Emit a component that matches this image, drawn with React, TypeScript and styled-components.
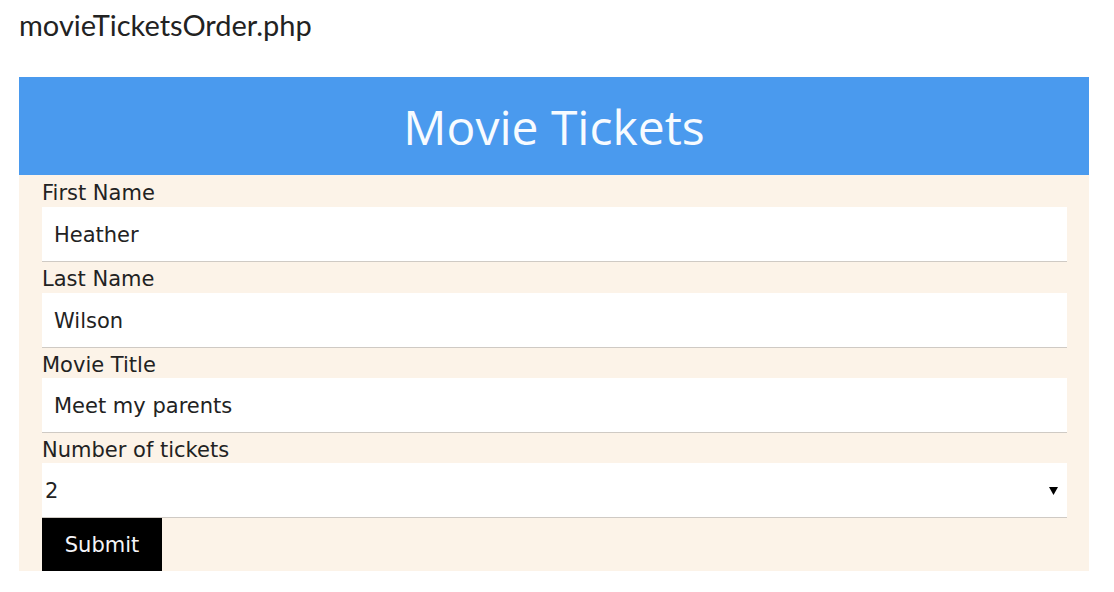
import styled, { createGlobalStyle } from "styled-components";

const GlobalStyle = createGlobalStyle`
  html, body {
    margin: 0;
    background: #ffffff;
  }
`;

const Page = styled.div`
  padding: 0 25px 0 19px;
`;

const FileName = styled.div`
  font-family: Lato, "Open Sans", sans-serif;
  font-size: 29px;
  color: #222;
  line-height: 32px;
  padding-top: 9px;
  height: 77px;
  box-sizing: border-box;
`;

const Panel = styled.div`
  background: #fcf3e8;
`;

const Header = styled.h1`
  margin: 0;
  height: 98px;
  background: #4a9aee;
  color: #f7fbff;
  font-family: "Open Sans", "Noto Sans", sans-serif;
  font-weight: 400;
  font-size: 48px;
  display: flex;
  align-items: center;
  justify-content: center;
`;

const Form = styled.form`
  padding: 0 22px 0 23px;
  display: flex;
  flex-direction: column;
`;

const Label = styled.label<{ $h: number }>`
  font-family: "DejaVu Sans", Verdana, sans-serif;
  font-size: 21px;
  color: #222;
  height: ${(p) => p.$h}px;
  padding-top: 3px;
  display: flex;
  align-items: center;
  box-sizing: border-box;
`;

const Input = styled.input`
  height: 55px;
  box-sizing: border-box;
  border: none;
  border-bottom: 1px solid #cfcac4;
  background: #fff;
  padding: 2px 12px 0;
  font-family: "DejaVu Sans", Verdana, sans-serif;
  font-size: 21px;
  color: #222;
  outline: none;
`;

const SelectWrap = styled.div`
  position: relative;
`;

const Select = styled.select`
  width: 100%;
  height: 55px;
  box-sizing: border-box;
  border: none;
  border-bottom: 1px solid #cfcac4;
  background: #fff;
  padding: 2px 3px 0;
  font-family: "DejaVu Sans", Verdana, sans-serif;
  font-size: 21px;
  color: #222;
  appearance: none;
  outline: none;
`;

const Arrow = styled.svg`
  position: absolute;
  right: 9px;
  top: 23px;
  pointer-events: none;
`;

const Submit = styled.button`
  align-self: flex-start;
  width: 120px;
  height: 53px;
  border: none;
  background: #000;
  color: #f4f4f8;
  font-family: "DejaVu Sans", Verdana, sans-serif;
  font-size: 21px;
  cursor: pointer;
`;

export default function App() {
  return (
    <Page>
      <GlobalStyle />
      <FileName>movieTicketsOrder.php</FileName>
      <Panel>
        <Header>Movie Tickets</Header>
        <Form onSubmit={(e) => e.preventDefault()}>
          <Label $h={32} htmlFor="first">First Name</Label>
          <Input id="first" defaultValue="Heather" />
          <Label $h={31} htmlFor="last">Last Name</Label>
          <Input id="last" defaultValue="Wilson" />
          <Label $h={30} htmlFor="movie">Movie Title</Label>
          <Input id="movie" defaultValue="Meet my parents" />
          <Label $h={30} htmlFor="count">Number of tickets</Label>
          <SelectWrap>
            <Select id="count" defaultValue="2">
              <option value="1">1</option>
              <option value="2">2</option>
              <option value="3">3</option>
              <option value="4">4</option>
            </Select>
            <Arrow width="9" height="9" viewBox="0 0 9 9">
              <path d="M0 1 H9 L4.5 9 Z" fill="#000" />
            </Arrow>
          </SelectWrap>
          <Submit type="submit">Submit</Submit>
        </Form>
      </Panel>
    </Page>
  );
}
